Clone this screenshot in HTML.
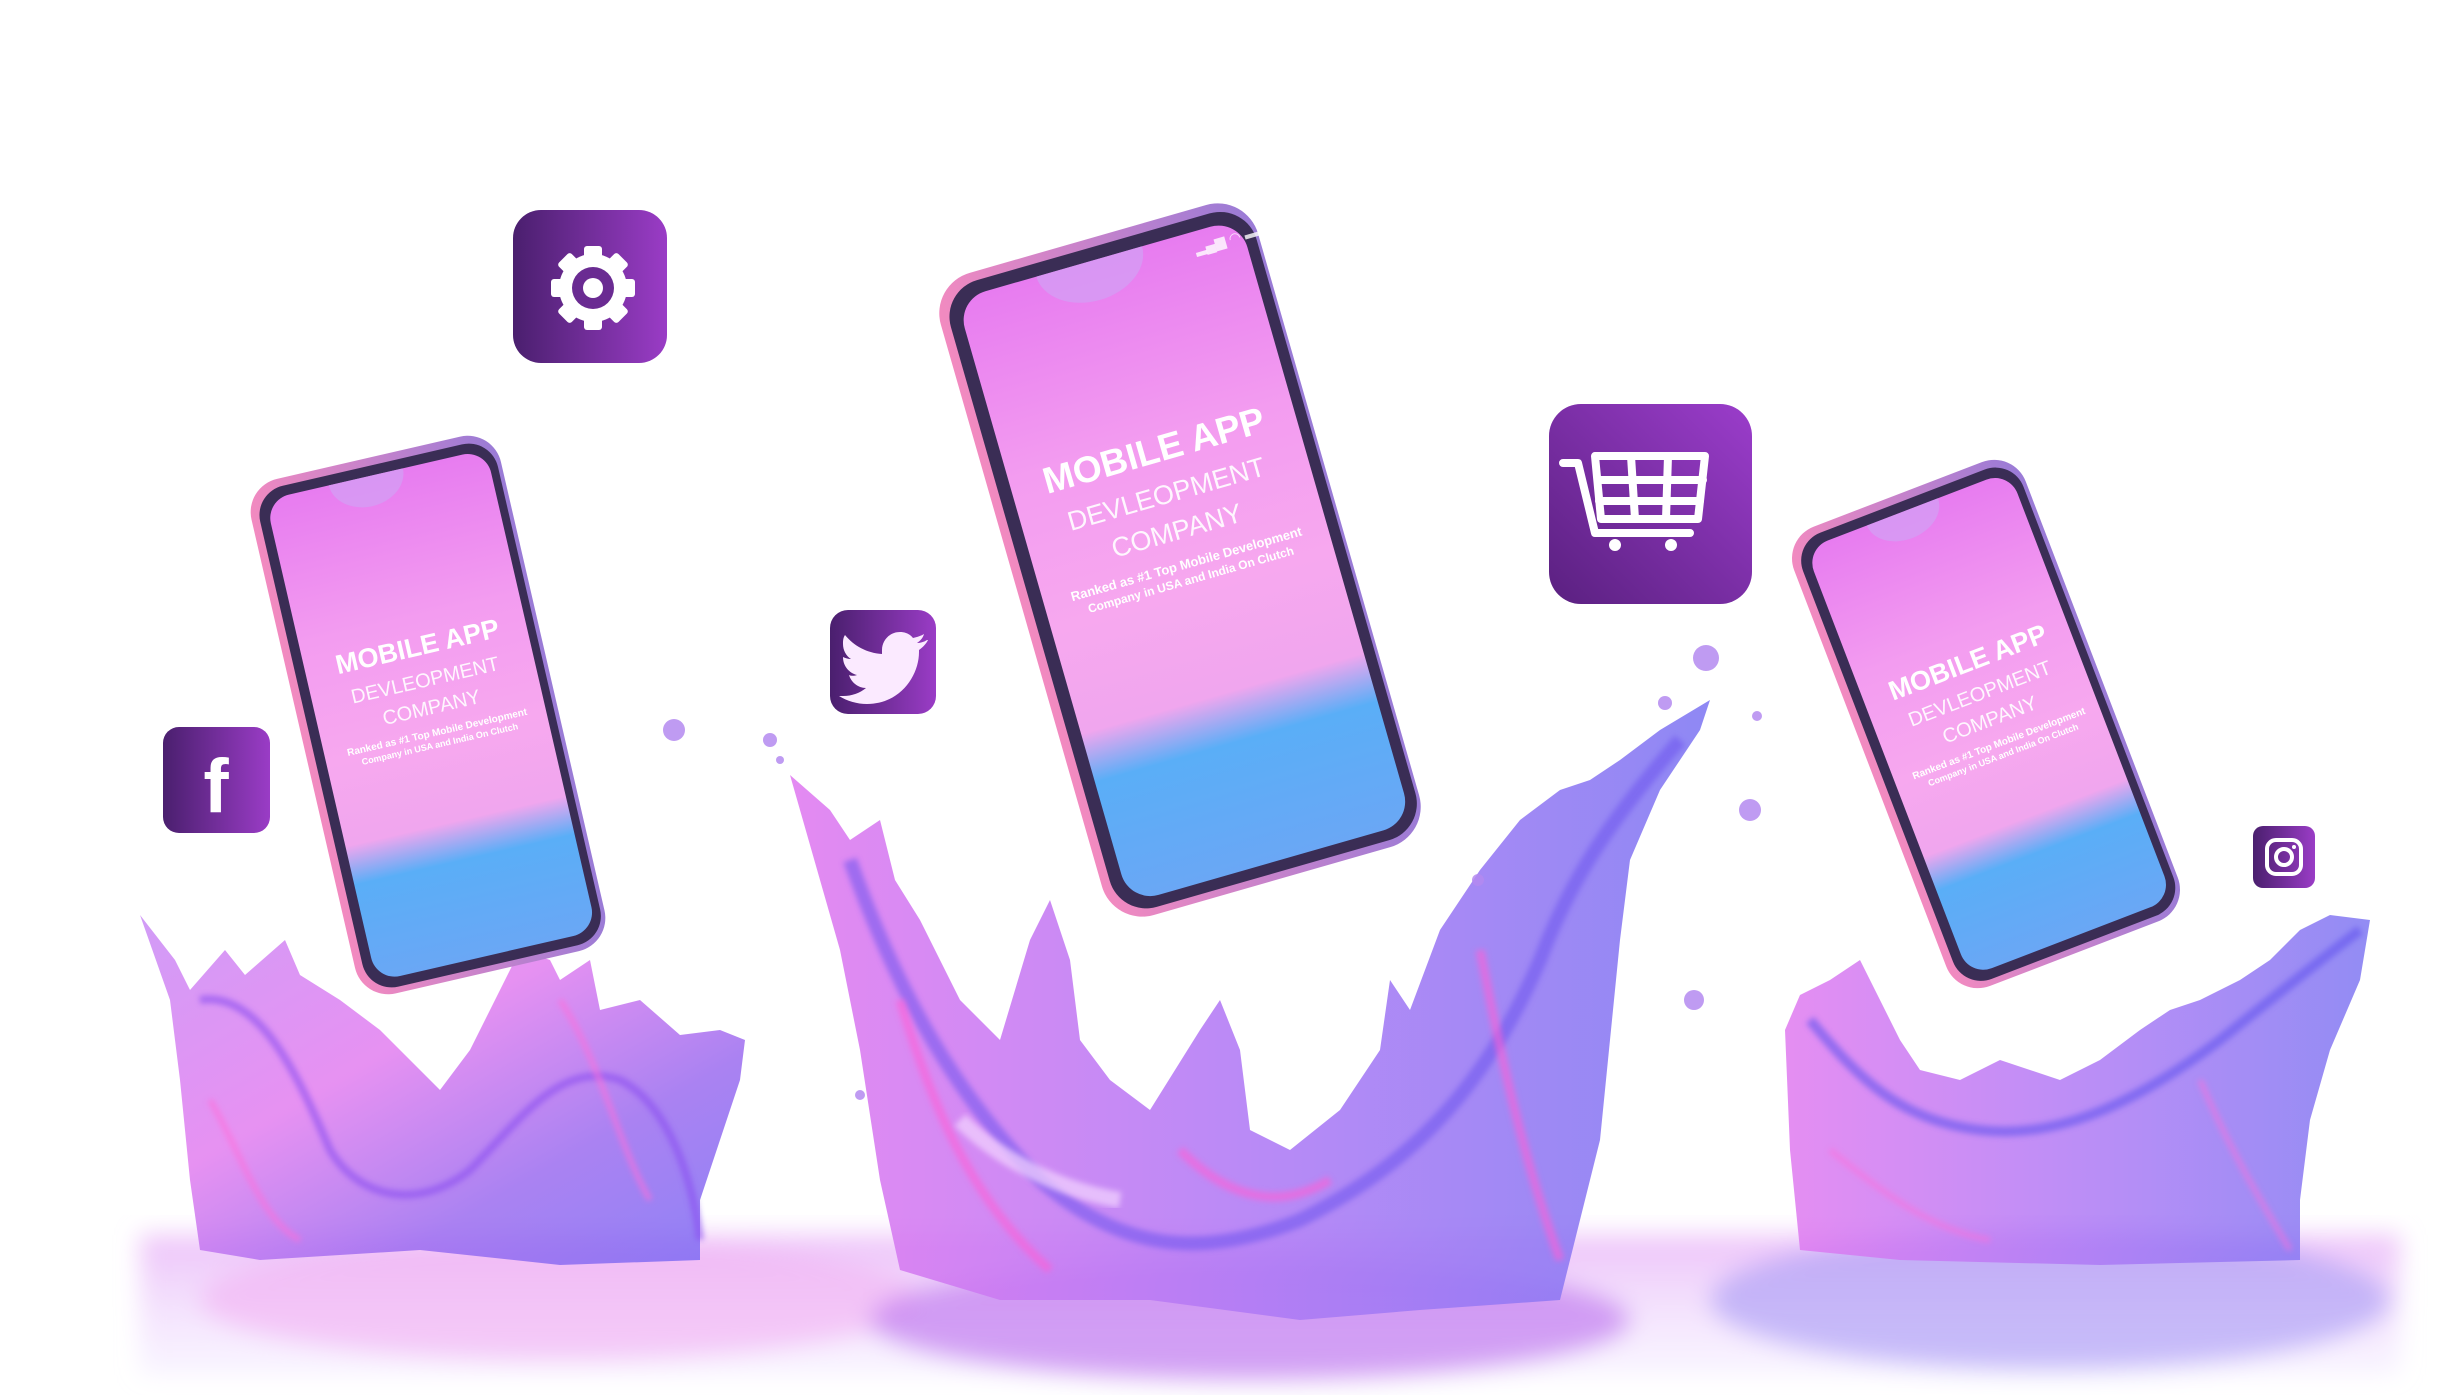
<!DOCTYPE html>
<html><head><meta charset="utf-8"><style>
html,body{margin:0;padding:0;background:#fff;width:2450px;height:1400px;overflow:hidden}
svg{display:block}
text{font-family:"Liberation Sans",sans-serif;fill:#fff}
</style></head><body>
<svg width="2450" height="1400" viewBox="0 0 2450 1400" xmlns="http://www.w3.org/2000/svg">
<defs>
<linearGradient id="ic" x1="0" y1="0" x2="1" y2="0"><stop offset="0" stop-color="#4a1f6e"/><stop offset="1" stop-color="#9a3cc6"/></linearGradient>
<linearGradient id="ic2" x1="0" y1="1" x2="1" y2="0"><stop offset="0" stop-color="#5a2080"/><stop offset="1" stop-color="#9b3dcb"/></linearGradient>
<linearGradient id="scr" x1="0" y1="0" x2="0" y2="1"><stop offset="0" stop-color="#e77cf0"/><stop offset="0.3" stop-color="#f39cf0"/><stop offset="0.55" stop-color="#f7a8ef"/><stop offset="0.72" stop-color="#f0a6ee"/><stop offset="0.8" stop-color="#5aaef7"/><stop offset="1" stop-color="#6aa7f5"/></linearGradient>
<linearGradient id="frame" x1="0" y1="0" x2="1" y2="0"><stop offset="0" stop-color="#f28ac0"/><stop offset="1" stop-color="#9a7bd6"/></linearGradient>
<linearGradient id="spl" x1="0" y1="0" x2="1" y2="1"><stop offset="0" stop-color="#c98af5"/><stop offset="0.4" stop-color="#e27ef0"/><stop offset="0.7" stop-color="#9b6cf0"/><stop offset="1" stop-color="#7a6cf3"/></linearGradient>
<linearGradient id="spl2" x1="0" y1="0" x2="1" y2="0"><stop offset="0" stop-color="#e07af0"/><stop offset="0.5" stop-color="#b07af5"/><stop offset="1" stop-color="#7f78f2"/></linearGradient>
<linearGradient id="floor" x1="0" y1="0" x2="0" y2="1"><stop offset="0" stop-color="#e6a8f6" stop-opacity="0.7"/><stop offset="1" stop-color="#eadcff" stop-opacity="0.3"/></linearGradient>
<filter id="bl"><feGaussianBlur stdDeviation="12"/></filter>
<filter id="bs"><feGaussianBlur stdDeviation="3"/></filter>
</defs>

<!-- floor -->
<g filter="url(#bl)">
<rect x="140" y="1235" width="2260" height="140" fill="url(#floor)"/>
<ellipse cx="560" cy="1300" rx="360" ry="60" fill="#f2b0f3" opacity="0.6"/>
<ellipse cx="1250" cy="1320" rx="380" ry="60" fill="#c27ef0" opacity="0.7"/>
<ellipse cx="2050" cy="1300" rx="340" ry="70" fill="#a69af5" opacity="0.6"/>
</g>

<!-- left splash -->
<path d="M140,915 L175,960 L190,990 L225,950 L245,975 L285,940 L300,975 L340,1000 L380,1030 L410,1060 L440,1090 L470,1050 L500,990 L520,950 L550,960 L560,980 L590,960 L600,1010 L640,1000 L680,1035 L720,1030 L745,1040 L740,1080 L720,1140 L700,1200 L700,1260 L560,1265 L420,1250 L260,1260 L200,1250 L190,1180 L180,1080 L170,1000 Z" fill="url(#spl)" opacity="0.85"/>
<path d="M200,1000 C260,990 300,1080 330,1150 C360,1200 420,1210 470,1170 C520,1120 560,1060 620,1080 C660,1100 690,1160 700,1240" fill="none" stroke="#8a4ef0" stroke-width="8" opacity="0.6" filter="url(#bs)"/>
<path d="M210,1100 C240,1150 260,1220 300,1240 M560,1000 C600,1060 620,1150 650,1200" fill="none" stroke="#ff6ed9" stroke-width="6" opacity="0.6" filter="url(#bs)"/>

<!-- center splash -->
<path d="M790,775 L830,810 L850,840 L880,820 L895,880 L920,920 L960,1000 L1000,1040 L1030,940 L1050,900 L1070,960 L1080,1040 L1110,1080 L1150,1110 L1200,1030 L1220,1000 L1240,1050 L1250,1130 L1290,1150 L1340,1110 L1380,1050 L1390,980 L1410,1010 L1440,930 L1480,870 L1520,820 L1560,790 L1590,780 L1620,760 L1660,730 L1710,700 L1700,730 L1660,790 L1630,860 L1620,940 L1610,1040 L1600,1140 L1580,1220 L1560,1300 L1420,1310 L1300,1320 L1150,1300 L1000,1300 L900,1270 L880,1180 L860,1050 L840,950 L820,880 Z" fill="url(#spl2)" opacity="0.88"/>
<path d="M850,860 C900,1000 960,1100 1040,1180 C1120,1250 1200,1260 1300,1220 C1400,1170 1480,1100 1540,960 C1570,880 1610,820 1680,740" fill="none" stroke="#6c52ee" stroke-width="14" opacity="0.55" filter="url(#bs)"/>
<path d="M900,1000 C930,1100 970,1200 1050,1270 M1480,950 C1500,1050 1520,1150 1560,1260 M1180,1150 C1230,1200 1280,1210 1330,1180" fill="none" stroke="#ff5fd5" stroke-width="9" opacity="0.6" filter="url(#bs)"/>
<path d="M960,1120 C1000,1160 1060,1190 1120,1200" fill="none" stroke="#f3d4ff" stroke-width="16" opacity="0.7" filter="url(#bs)"/>

<!-- right splash -->
<path d="M1785,1030 L1800,995 L1830,980 L1860,960 L1880,1000 L1900,1040 L1920,1070 L1960,1080 L2000,1060 L2030,1070 L2060,1080 L2100,1060 L2140,1030 L2170,1010 L2200,1000 L2240,980 L2270,960 L2300,930 L2330,915 L2370,920 L2360,980 L2330,1050 L2310,1120 L2300,1200 L2300,1260 L2100,1265 L1900,1260 L1800,1250 L1790,1150 Z" fill="url(#spl2)" opacity="0.85"/>
<path d="M1810,1020 C1860,1080 1900,1120 1980,1130 C2060,1140 2140,1100 2220,1040 C2270,1000 2320,960 2360,930" fill="none" stroke="#6454ee" stroke-width="10" opacity="0.6" filter="url(#bs)"/>
<path d="M1830,1150 C1880,1190 1930,1230 1990,1240 M2200,1080 C2230,1150 2260,1200 2290,1250" fill="none" stroke="#ff6ed9" stroke-width="6" opacity="0.5" filter="url(#bs)"/>

<!-- droplets -->
<g fill="#b48af0" opacity="0.85">
<circle cx="674" cy="730" r="11"/><circle cx="770" cy="740" r="7"/><circle cx="1706" cy="658" r="13"/><circle cx="1665" cy="703" r="7"/><circle cx="1750" cy="810" r="11"/><circle cx="1694" cy="1000" r="10"/><circle cx="1478" cy="880" r="6"/><circle cx="1757" cy="716" r="5"/><circle cx="780" cy="760" r="4"/><circle cx="860" cy="1095" r="5"/>
</g>

<!-- left phone -->
<g transform="translate(428,715) rotate(-13)">
<rect x="-128" y="-264" width="256" height="528" rx="34" fill="url(#frame)"/>
<rect x="-120" y="-256" width="244" height="514" rx="30" fill="#3a2d55"/>
<rect x="-110" y="-246" width="226" height="494" rx="24" fill="url(#scr)"/>
<path d="M-45,-246 a38,30 0 0 0 76,0 z" fill="#d59cf4" opacity="0.8"/>
<text x="5" y="-60" font-size="27" font-weight="bold" text-anchor="middle">MOBILE APP</text>
<text x="5" y="-28" font-size="20" text-anchor="middle" fill-opacity="0.9">DEVLEOPMENT</text>
<text x="5" y="0" font-size="20" text-anchor="middle" fill-opacity="0.9">COMPANY</text>
<text x="5" y="22" font-size="10" font-weight="bold" text-anchor="middle">Ranked as #1 Top Mobile Development</text>
<text x="5" y="34" font-size="9" font-weight="bold" text-anchor="middle">Company in USA and India On Clutch</text>
</g>

<!-- center phone -->
<g transform="translate(1180,560) rotate(-16)">
<rect x="-165" y="-334" width="330" height="668" rx="42" fill="url(#frame)"/>
<rect x="-156" y="-325" width="318" height="652" rx="38" fill="#3a2d55"/>
<rect x="-143" y="-312" width="294" height="628" rx="30" fill="url(#scr)"/>
<path d="M-60,-312 a55,40 0 0 0 110,0 z" fill="#d59cf4" opacity="0.8"/>
<text x="100" y="-290" font-size="14" fill-opacity="0.8">▂▄▆ ◠ ▬</text>
<text x="5" y="-100" font-size="37" font-weight="bold" text-anchor="middle">MOBILE APP</text>
<text x="5" y="-58" font-size="27" text-anchor="middle" fill-opacity="0.9">DEVLEOPMENT</text>
<text x="5" y="-20" font-size="27" text-anchor="middle" fill-opacity="0.9">COMPANY</text>
<text x="5" y="10" font-size="13" font-weight="bold" text-anchor="middle">Ranked as #1 Top Mobile Development</text>
<text x="5" y="26" font-size="12" font-weight="bold" text-anchor="middle">Company in USA and India On Clutch</text>
</g>

<!-- right phone -->
<g transform="translate(1986,724) rotate(-21)">
<rect x="-124" y="-246" width="248" height="492" rx="34" fill="url(#frame)"/>
<rect x="-116" y="-238" width="236" height="478" rx="30" fill="#3a2d55"/>
<rect x="-106" y="-228" width="218" height="458" rx="24" fill="url(#scr)"/>
<path d="M-40,-228 a38,28 0 0 0 76,0 z" fill="#d59cf4" opacity="0.8"/>
<text x="5" y="-55" font-size="27" font-weight="bold" text-anchor="middle">MOBILE APP</text>
<text x="5" y="-24" font-size="20" text-anchor="middle" fill-opacity="0.9">DEVLEOPMENT</text>
<text x="5" y="4" font-size="20" text-anchor="middle" fill-opacity="0.9">COMPANY</text>
<text x="5" y="26" font-size="10" font-weight="bold" text-anchor="middle">Ranked as #1 Top Mobile Development</text>
<text x="5" y="38" font-size="9" font-weight="bold" text-anchor="middle">Company in USA and India On Clutch</text>
</g>

<!-- gear icon -->
<rect x="513" y="210" width="154" height="153" rx="28" fill="url(#ic)"/>
<g transform="translate(593,288)" fill="#fff">
<g>
<rect x="-9" y="-42" width="18" height="84" rx="3"/>
<rect x="-9" y="-42" width="18" height="84" rx="3" transform="rotate(45)"/>
<rect x="-9" y="-42" width="18" height="84" rx="3" transform="rotate(90)"/>
<rect x="-9" y="-42" width="18" height="84" rx="3" transform="rotate(135)"/>
</g>
<circle r="34"/>
<circle r="21" fill="#6a2b92"/>
<circle r="10"/>
</g>

<!-- cart icon -->
<g transform="translate(-17,0)">
<rect x="1566" y="404" width="203" height="200" rx="32" fill="url(#ic2)"/>
<g transform="translate(1550,390)" fill="none" stroke="#fff" stroke-width="8" stroke-linecap="round" stroke-linejoin="round">
<path d="M30,73 L45,73 L62,143 L157,143"/>
<path d="M62,66 L172,66 L165,129 L68,129 Z"/>
<path d="M65,90 L170,90 M66,111 L167,111 M98,66 L102,129 M135,66 L133,129"/>
</g>
<circle cx="1632" cy="545" r="6" fill="#fff"/><circle cx="1688" cy="545" r="6" fill="#fff"/>
</g>

<!-- twitter -->
<g transform="translate(-9,0)">
<rect x="839" y="610" width="106" height="104" rx="18" fill="url(#ic)"/>
<path d="M936,640 c-3,2 -7,3 -10,3 c3,-2 6,-5 7,-9 c-3,2 -7,3 -11,4 c-3,-4 -8,-6 -13,-6 c-10,0 -18,8 -18,18 c0,1 0,3 0,4 c-15,-1 -28,-8 -37,-19 c-2,3 -2,6 -2,9 c0,6 3,12 8,15 c-3,0 -6,-1 -8,-2 c0,9 6,16 14,18 c-3,1 -6,1 -8,0 c2,7 9,13 17,13 c-6,5 -14,8 -23,8 c-1,0 -3,0 -4,0 c8,5 18,8 28,8 c33,0 52,-28 52,-52 c0,-1 0,-2 0,-2 c4,-3 7,-6 9,-10 z" fill="#fbeaff"/>
</g>

<!-- facebook -->
<rect x="163" y="727" width="107" height="106" rx="16" fill="url(#ic)"/>
<text x="216" y="812" font-size="76" font-weight="bold" text-anchor="middle">f</text>

<!-- instagram -->
<g transform="translate(-27,-8)">
<rect x="2280" y="834" width="62" height="62" rx="10" fill="url(#ic)"/>
<rect x="2294" y="848" width="34" height="34" rx="9" fill="none" stroke="#fff" stroke-width="4"/>
<circle cx="2311" cy="865" r="8" fill="none" stroke="#fff" stroke-width="4"/>
<circle cx="2321" cy="855" r="2" fill="#fff"/>
</g>
</svg>
</body></html>
